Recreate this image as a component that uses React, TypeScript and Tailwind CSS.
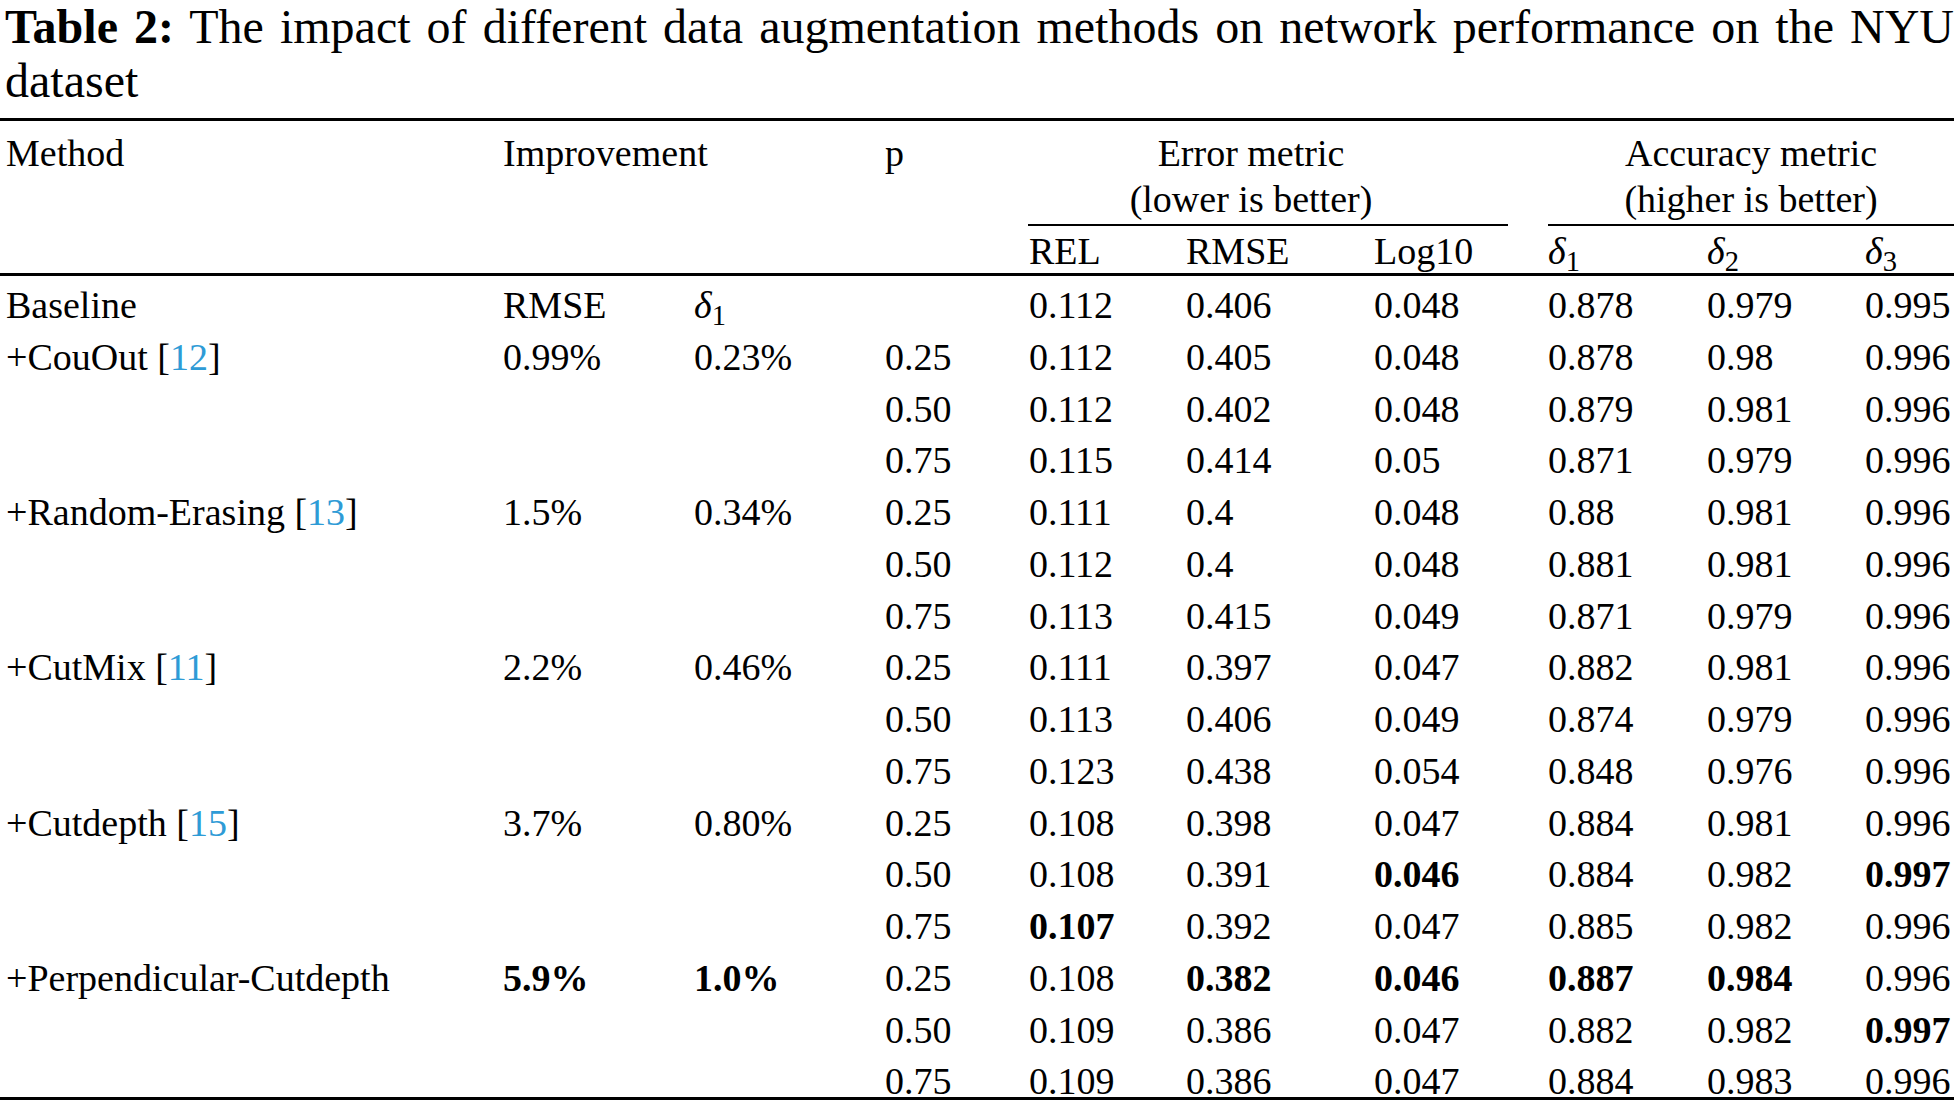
const cols =
  "grid grid-cols-[497px_191px_191px_144px_157px_188px_174px_159px_158px_89px] pl-[6px]";

type Cell = string | { b: string };

const groups: {
  method: string;
  ref?: string;
  rmse: Cell;
  d1: Cell;
  rows: [string, ...Cell[]][];
}[] = [
  {
    method: "+CouOut",
    ref: "12",
    rmse: "0.99%",
    d1: "0.23%",
    rows: [
      ["0.25", "0.112", "0.405", "0.048", "0.878", "0.98", "0.996"],
      ["0.50", "0.112", "0.402", "0.048", "0.879", "0.981", "0.996"],
      ["0.75", "0.115", "0.414", "0.05", "0.871", "0.979", "0.996"],
    ],
  },
  {
    method: "+Random-Erasing",
    ref: "13",
    rmse: "1.5%",
    d1: "0.34%",
    rows: [
      ["0.25", "0.111", "0.4", "0.048", "0.88", "0.981", "0.996"],
      ["0.50", "0.112", "0.4", "0.048", "0.881", "0.981", "0.996"],
      ["0.75", "0.113", "0.415", "0.049", "0.871", "0.979", "0.996"],
    ],
  },
  {
    method: "+CutMix",
    ref: "11",
    rmse: "2.2%",
    d1: "0.46%",
    rows: [
      ["0.25", "0.111", "0.397", "0.047", "0.882", "0.981", "0.996"],
      ["0.50", "0.113", "0.406", "0.049", "0.874", "0.979", "0.996"],
      ["0.75", "0.123", "0.438", "0.054", "0.848", "0.976", "0.996"],
    ],
  },
  {
    method: "+Cutdepth",
    ref: "15",
    rmse: "3.7%",
    d1: "0.80%",
    rows: [
      ["0.25", "0.108", "0.398", "0.047", "0.884", "0.981", "0.996"],
      ["0.50", "0.108", "0.391", { b: "0.046" }, "0.884", "0.982", { b: "0.997" }],
      ["0.75", { b: "0.107" }, "0.392", "0.047", "0.885", "0.982", "0.996"],
    ],
  },
  {
    method: "+Perpendicular-Cutdepth",
    rmse: { b: "5.9%" },
    d1: { b: "1.0%" },
    rows: [
      ["0.25", "0.108", { b: "0.382" }, { b: "0.046" }, { b: "0.887" }, { b: "0.984" }, "0.996"],
      ["0.50", "0.109", "0.386", "0.047", "0.882", "0.982", { b: "0.997" }],
      ["0.75", "0.109", "0.386", "0.047", "0.884", "0.983", "0.996"],
    ],
  },
];

function Val({ v }: { v: Cell }) {
  if (typeof v === "string") return <div>{v}</div>;
  return <div className="font-bold">{v.b}</div>;
}

function Delta({ n }: { n: string }) {
  return (
    <span>
      <i>δ</i>
      <sub>{n}</sub>
    </span>
  );
}

function Rule() {
  return <div className="h-[3px] bg-black" />;
}

export default function App() {
  const body: { key: string; cells: React.ReactNode[] }[] = [
    {
      key: "baseline",
      cells: [
        "Baseline",
        "RMSE",
        <Delta n="1" />,
        "",
        "0.112",
        "0.406",
        "0.048",
        "0.878",
        "0.979",
        "0.995",
      ],
    },
  ];
  groups.forEach((g) => {
    g.rows.forEach((r, i) => {
      const first = i === 0;
      body.push({
        key: g.method + r[0],
        cells: [
          first ? (
            <span>
              {g.method}
              {g.ref && (
                <>
                  {" "}[<span className="text-[#2e9bd6]">{g.ref}</span>]
                </>
              )}
            </span>
          ) : (
            ""
          ),
          first ? <Val v={g.rmse} /> : "",
          first ? <Val v={g.d1} /> : "",
          ...r.map((c, j) => <Val key={j} v={c} />),
        ],
      });
    });
  });

  return (
    <div className="w-[1954px] h-[1104px] overflow-hidden bg-white text-black font-['Liberation_Serif','Times_New_Roman',serif]">
      {/* Caption */}
      <p className="pl-[5px] text-[48px] leading-[54px] text-justify">
        <b>Table 2:</b> The impact of different data augmentation methods on network
        performance on the NYU dataset
      </p>

      <div className="mt-[10px]">
        <Rule />

        {/* Header */}
        <div className="text-[38px]">
          <div className={cols}>
            <div className="pt-[9px] leading-[46px]">Method</div>
            <div className="col-span-2 pt-[9px] leading-[46px]">Improvement</div>
            <div className="pt-[9px] leading-[46px]">p</div>
            <div className="col-span-3">
              <div className="w-[480px] pt-[9px] pr-[36px] text-center leading-[46px]">
                <div>Error metric</div>
                <div>(lower is better)</div>
              </div>
              <div className="mt-[2px] -ml-px w-[480px] h-[2px] bg-black" />
            </div>
            <div className="col-span-3">
              <div className="pt-[9px] text-center leading-[46px]">
                <div>Accuracy metric</div>
                <div>(higher is better)</div>
              </div>
              <div className="mt-[2px] h-[2px] bg-black" />
            </div>
          </div>
          <div className={cols + " pt-[4px] leading-[43px]"}>
            <div />
            <div />
            <div />
            <div />
            <div>REL</div>
            <div>RMSE</div>
            <div>Log10</div>
            <div>
              <Delta n="1" />
            </div>
            <div>
              <Delta n="2" />
            </div>
            <div>
              <Delta n="3" />
            </div>
          </div>
        </div>

        <Rule />

        {/* Body */}
        <div className="text-[38px] leading-[38px]">
          {body.map((row, i) => (
            <div
              key={row.key}
              className={
                cols +
                (i === body.length - 1 ? " h-[45px] pt-[10px]" : " h-[51.75px] pt-[10px]")
              }
            >
              {row.cells.map((c, j) => (
                <div key={j} className="whitespace-nowrap">
                  {c}
                </div>
              ))}
            </div>
          ))}
        </div>

        <Rule />
      </div>
    </div>
  );
}
